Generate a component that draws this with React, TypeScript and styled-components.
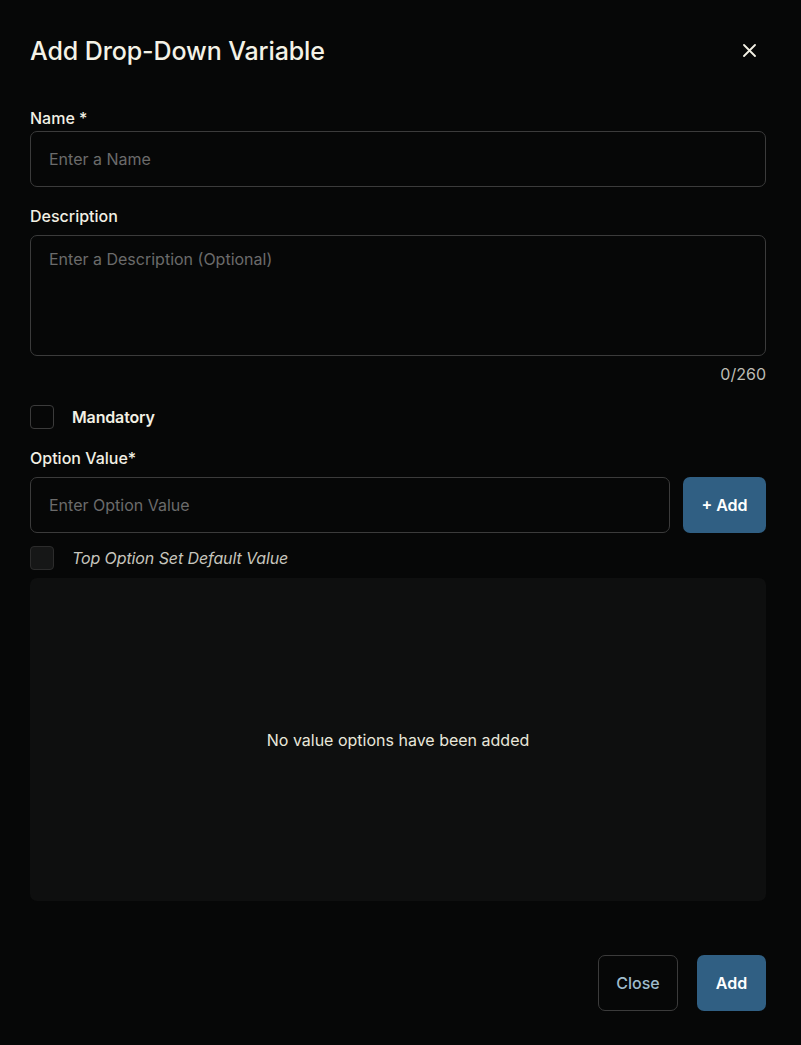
import React from "react";
import styled, { createGlobalStyle } from "styled-components";

const GlobalStyle = createGlobalStyle`
  html, body {
    margin: 0;
    padding: 0;
    background: #060707;
  }
  body {
    font-family: Inter, "Noto Sans", "Liberation Sans", sans-serif;
    color: #f2f0e4;
  }
  * { box-sizing: border-box; }
`;

const Dialog = styled.div`
  width: 801px;
  min-height: 1045px;
  padding: 35px 35px 0 30px;
  display: flex;
  flex-direction: column;
`;

const Header = styled.div`
  display: flex;
  align-items: center;
  justify-content: space-between;
  height: 32px;
  margin-bottom: 41px;
`;

const Title = styled.h1`
  margin: 0;
  font-size: 25px;
  line-height: 32px;
  font-weight: 500;
  color: #f4f2e6;
  letter-spacing: -0.1px;
`;

const CloseIcon = styled.button`
  width: 24px;
  height: 24px;
  margin: 0 5px 2px 0;
  padding: 0;
  border: none;
  background: transparent;
  display: flex;
  align-items: center;
  justify-content: center;
  cursor: pointer;
`;

const Label = styled.label<{ $mb: number; $mt?: number }>`
  display: block;
  font-size: 16px;
  line-height: 20px;
  font-weight: 500;
  color: #f2f0e4;
  margin-top: ${(p) => p.$mt ?? 0}px;
  margin-bottom: ${(p) => p.$mb}px;
`;

const fieldBase = `
  width: 100%;
  background: #060707;
  border: 1px solid #3b3b3b;
  border-radius: 7px;
  color: #f2f0e4;
  font-family: Inter, "Noto Sans", "Liberation Sans", sans-serif;
  font-size: 16px;
  line-height: 20px;
  outline: none;
  &::placeholder { color: #6b6b6b; }
`;

const TextInput = styled.input`
  ${fieldBase}
  height: 56px;
  padding: 0 18px;
`;

const TextArea = styled.textarea`
  ${fieldBase}
  height: 121px;
  padding: 13px 18px;
  resize: none;
  display: block;
`;

const Counter = styled.div`
  text-align: right;
  font-size: 16px;
  line-height: 20px;
  color: #bdbcb4;
  margin-top: 8px;
`;

const CheckRow = styled.div<{ $mt: number }>`
  display: flex;
  align-items: center;
  gap: 18px;
  height: 24px;
  margin-top: ${(p) => p.$mt}px;
`;

const Box = styled.span<{ $filled?: boolean }>`
  width: 24px;
  height: 24px;
  flex: none;
  border: 1px solid ${(p) => (p.$filled ? "#2c2c2c" : "#3b3b3b")};
  border-radius: 4px;
  background: ${(p) => (p.$filled ? "#161717" : "transparent")};
`;

const CheckLabel = styled.span<{ $italic?: boolean }>`
  font-size: 16px;
  line-height: 20px;
  font-weight: ${(p) => (p.$italic ? 400 : 600)};
  font-style: ${(p) => (p.$italic ? "italic" : "normal")};
  color: ${(p) => (p.$italic ? "#c6c5bd" : "#f2f0e4")};
  letter-spacing: ${(p) => (p.$italic ? "-0.1px" : "-0.15px")};
`;

const OptionRow = styled.div`
  display: flex;
  gap: 13px;
`;

const PrimaryButton = styled.button<{ $w: number }>`
  width: ${(p) => p.$w}px;
  height: 56px;
  flex: none;
  border: none;
  border-radius: 7px;
  background: #305f83;
  color: #ffffff;
  font-family: Inter, "Noto Sans", "Liberation Sans", sans-serif;
  font-size: 16px;
  font-weight: 600;
  cursor: pointer;
`;

const GhostButton = styled.button`
  width: 80px;
  height: 56px;
  border: 1px solid #3b3b3b;
  border-radius: 7px;
  background: transparent;
  color: #9fbccd;
  font-family: Inter, "Noto Sans", "Liberation Sans", sans-serif;
  font-size: 16px;
  font-weight: 500;
  cursor: pointer;
`;

const EmptyPanel = styled.div`
  margin-top: 8px;
  height: 323px;
  border-radius: 7px;
  background: #0e0f0f;
  display: flex;
  align-items: center;
  justify-content: center;
  font-size: 16px;
  line-height: 20px;
  color: #e9e7db;
`;

const Footer = styled.div`
  display: flex;
  justify-content: flex-end;
  gap: 19px;
  margin-top: 54px;
`;

export default function App() {
  return (
    <>
      <GlobalStyle />
      <Dialog>
        <Header>
          <Title>Add Drop-Down Variable</Title>
          <CloseIcon aria-label="Close">
            <svg width="13" height="13" viewBox="0 0 13 13" fill="none">
              <path d="M1 1L12 12M12 1L1 12" stroke="#f2f0e4" strokeWidth="1.8" strokeLinecap="round" />
            </svg>
          </CloseIcon>
        </Header>

        <Label $mb={3}>Name *</Label>
        <TextInput placeholder="Enter a Name" />

        <Label $mt={19} $mb={9}>Description</Label>
        <TextArea placeholder="Enter a Description (Optional)" />
        <Counter>0/260</Counter>

        <CheckRow $mt={21}>
          <Box />
          <CheckLabel>Mandatory</CheckLabel>
        </CheckRow>

        <Label $mt={19} $mb={9}>Option Value*</Label>
        <OptionRow>
          <TextInput placeholder="Enter Option Value" />
          <PrimaryButton $w={83}>+ Add</PrimaryButton>
        </OptionRow>

        <CheckRow $mt={13}>
          <Box $filled />
          <CheckLabel $italic>Top Option Set Default Value</CheckLabel>
        </CheckRow>

        <EmptyPanel>No value options have been added</EmptyPanel>

        <Footer>
          <GhostButton>Close</GhostButton>
          <PrimaryButton $w={69}>Add</PrimaryButton>
        </Footer>
      </Dialog>
    </>
  );
}
